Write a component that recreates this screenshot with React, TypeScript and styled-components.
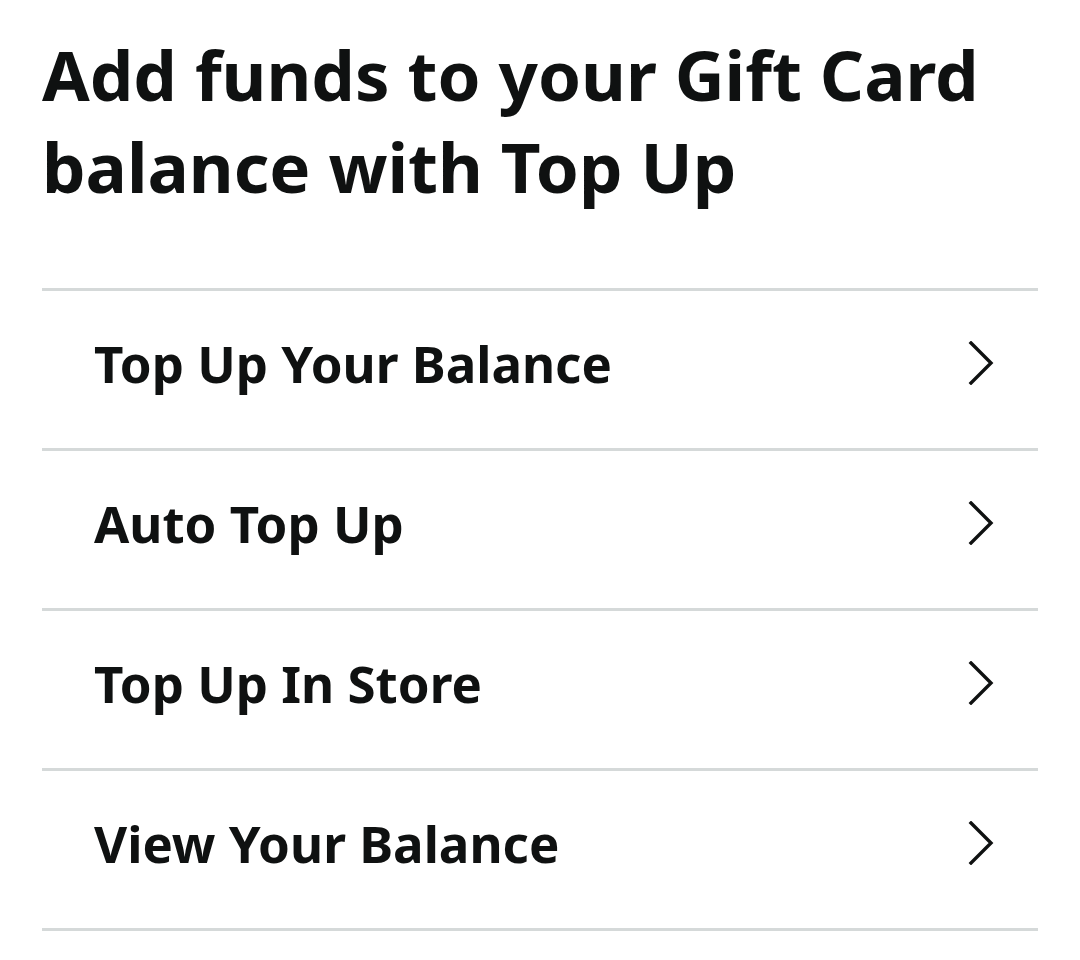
import React from 'react';
import styled, { createGlobalStyle } from 'styled-components';

const GlobalStyle = createGlobalStyle`
  html, body {
    margin: 0;
    padding: 0;
    background: #ffffff;
  }
  body {
    font-family: 'Noto Sans', 'Open Sans', Arial, sans-serif;
    color: #0f1111;
  }
`;

const Page = styled.div`
  width: 1080px;
  padding: 28px 42px 0 42px;
  box-sizing: border-box;
`;

const Heading = styled.h1`
  margin: 0 0 76px 0;
  font-size: 69px;
  font-weight: 700;
  line-height: 92px;
  letter-spacing: 0;
`;

const List = styled.div`
  border-top: 3px solid #d5d9d9;
`;

const Row = styled.a`
  display: flex;
  align-items: center;
  justify-content: space-between;
  height: 157px;
  padding: 0 43px 0 52px;
  border-bottom: 3px solid #d5d9d9;
  color: #0f1111;
  text-decoration: none;
  cursor: pointer;
`;

const Label = styled.span`
  font-size: 51px;
  font-weight: 700;
  margin-top: -14px;
`;

const Chevron = () => (
  <svg width="28" height="44" viewBox="0 0 28 44" fill="none" style={{ marginTop: -14 }}>
    <path d="M4 2 L24 22 L4 42" stroke="#0f1111" strokeWidth="3.4" strokeLinecap="square" strokeLinejoin="miter" />
  </svg>
);

const items = ['Top Up Your Balance', 'Auto Top Up', 'Top Up In Store', 'View Your Balance'];

const App: React.FC = () => {
  return (
    <>
      <GlobalStyle />
      <Page>
        <Heading>Add funds to your Gift Card balance with Top Up</Heading>
        <List>
          {items.map((label) => (
            <Row key={label}>
              <Label>{label}</Label>
              <Chevron />
            </Row>
          ))}
        </List>
      </Page>
    </>
  );
};

export default App;
